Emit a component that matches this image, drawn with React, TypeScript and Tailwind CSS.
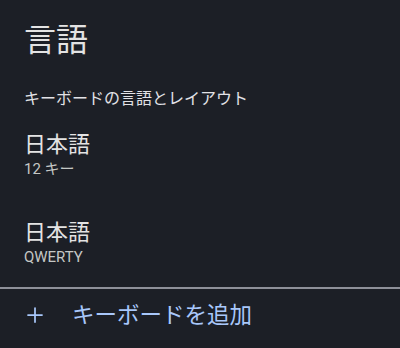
import { Plus } from "lucide-react";

type Teclado = {
  nome: string;
  layout: string;
};

const teclados: Teclado[] = [
  { nome: "日本語", layout: "12 キー" },
  { nome: "日本語", layout: "QWERTY" },
];

export default function App() {
  return (
    <div
      className="w-[400px] h-[348px] overflow-hidden bg-[#1c1f26] text-[#e3e3e3]"
      style={{ fontFamily: 'Roboto, "Noto Sans CJK JP", sans-serif' }}
    >
      <div className="px-6 pt-[20px]">
        <h1 className="text-[32px] leading-[40px] font-normal">言語</h1>

        <p className="mt-[27px] text-[16px] leading-[24px] text-[#e2e2e6]">
          キーボードの言語とレイアウト
        </p>

        <div className="mt-[22px] flex flex-col gap-[43px]">
          {teclados.map((teclado, i) => (
            <div key={i}>
              <p className="text-[22px] leading-[24px]">{teclado.nome}</p>
              <p className="mt-[3px] text-[15px] leading-[18px] text-[#c4c7c5]">
                {teclado.layout}
              </p>
            </div>
          ))}
        </div>
      </div>

      <div className="mt-[21px] h-[2px] bg-[#8e9099]" />

      <div className="mt-[12px] flex items-center pl-[23px] text-[#a8c7fa]">
        <Plus className="w-6 h-6" strokeWidth={1.75} />
        <span className="ml-[25px] text-[22.5px] leading-[28px]">
          キーボードを追加
        </span>
      </div>
    </div>
  );
}
